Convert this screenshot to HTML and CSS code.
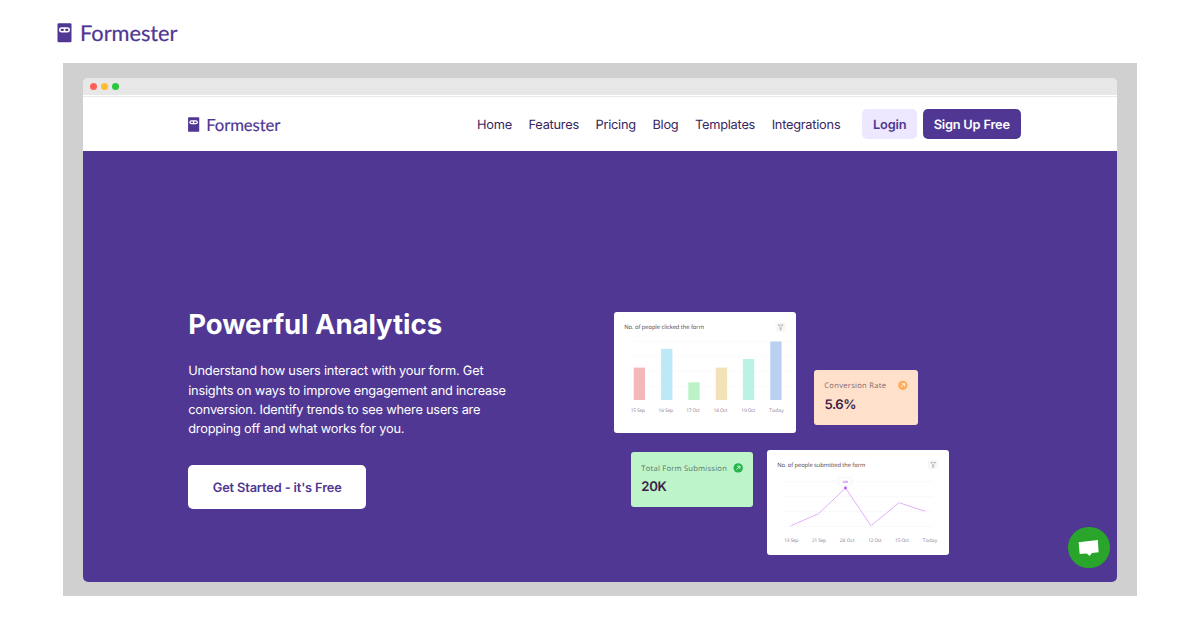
FILE: index.html
```html
<!DOCTYPE html>
<html lang="en">
<head>
<meta charset="utf-8">
<title>Formester</title>
<link rel="stylesheet" href="styles.css">
</head>
<body>
<header class="brand">
  <svg class="brand-logo" viewBox="0 0 124 26" role="img" aria-label="Formester">
    <rect x="0.5" y="3.3" width="14" height="19" rx="1.2" fill="#4f3793"/>
    <rect x="2" y="7.2" width="11" height="5.2" rx="2.6" fill="#fff"/>
    <rect x="3.6" y="8.7" width="3.3" height="2.2" rx="1" fill="#4f3793"/><rect x="8.1" y="8.7" width="3.3" height="2.2" rx="1" fill="#4f3793"/>
    <text x="23" y="21.2" textLength="97.5" class="wordmark">Formester</text>
  </svg>
</header>
<main class="stage">
  <div class="window">
    <div class="titlebar"><i class="dot red"></i><i class="dot yellow"></i><i class="dot green"></i></div>
    <nav class="nav">
      <svg class="nav-logo" viewBox="0 0 124 26" role="img" aria-label="Formester">
        <rect x="1" y="2.9" width="14.5" height="19" rx="1.2" fill="#4f3793"/>
        <rect x="2.7" y="6.8" width="11" height="5.2" rx="2.6" fill="#fff"/>
        <rect x="4.3" y="8.3" width="3.3" height="2.2" rx="1" fill="#4f3793"/><rect x="8.8" y="8.3" width="3.3" height="2.2" rx="1" fill="#4f3793"/>
        <text x="24.5" y="21.2" textLength="96.5" class="wordmark">Formester</text>
      </svg>
      <div class="links"><a>Home</a><a>Features</a><a>Pricing</a><a>Blog</a><a>Templates</a><a>Integrations</a></div>
      <a class="btn login">Login</a>
      <a class="btn signup">Sign Up Free</a>
    </nav>
    <section class="hero">
      <div class="copy">
        <h1>Powerful Analytics</h1>
        <p>Understand how users interact with your form. Get<br>insights on ways to improve engagement and increase<br>conversion. Identify trends to see where users are<br>dropping off and what works for you.</p>
        <a class="cta">Get Started - it's Free</a>
      </div>
      <div class="art">
        <div class="row top">
          <svg class="card bars" viewBox="0 0 182 120.5">
            <text x="10.3" y="17" textLength="79.7" class="title">No. of people clicked the form</text>
            <rect x="161.5" y="10" width="10.5" height="10" rx="2" fill="#f8f8f8"/>
            <path d="M164.2 12.9h5l-1.9 2.3v2.3l-1.2.7v-3z" class="filter"/>
            <path d="M20 29.3H178M20 44.2H178M20 59.2H178M20 74.2H178" class="grid"/>
            <rect x="19.7" y="55.6" width="11.3" height="32.4" fill="#f4b8bb"/>
            <rect x="47.1" y="36.8" width="11.3" height="51.2" fill="#bde9f6"/>
            <rect x="74.3" y="70.3" width="11.3" height="17.7" fill="#bbf2c6"/>
            <rect x="101.8" y="55.6" width="11.3" height="32.4" fill="#f3e2b8"/>
            <rect x="128.9" y="47" width="11.3" height="41" fill="#baf2e6"/>
            <rect x="156.3" y="29.5" width="11.3" height="58.5" fill="#bad0f3"/>
            <g class="axis"><text x="16.7" y="100" textLength="14.3">15 Sep</text><text x="44.5" y="100" textLength="14.5">16 Sep</text><text x="72.3" y="100" textLength="13.5">17 Oct</text><text x="99.5" y="100" textLength="14">18 Oct</text><text x="127.3" y="100" textLength="14">19 Oct</text><text x="155.3" y="100" textLength="14.3">Today</text></g>
          </svg>
          <svg class="card rate" viewBox="0 0 104 55">
            <text x="10.3" y="18.2" textLength="61.7" class="label">Conversion Rate</text>
            <circle cx="88.8" cy="15.4" r="4.7" fill="#ffad5c"/><path d="M87 17.2l3.5-3.5M87.8 13.7h2.7v2.7" class="arrow"/>
            <text x="10.5" y="38.9" textLength="32" class="value">5.6%</text>
          </svg>
        </div>
        <div class="row bottom">
          <svg class="card total" viewBox="0 0 122 55">
            <text x="10.3" y="19" textLength="85.5" class="label">Total Form Submission</text>
            <circle cx="107.2" cy="15.9" r="4.7" fill="#26b54b"/><path d="M105.4 17.7l3.5-3.5M106.2 14.2h2.7v2.7" class="arrow"/>
            <text x="10.3" y="39.3" textLength="25.5" class="value">20K</text>
          </svg>
          <svg class="card line" viewBox="0 0 182 105">
            <text x="10.3" y="16.5" textLength="88" class="title">No. of people submitted the form</text>
            <rect x="161" y="9.8" width="10.5" height="9.5" rx="2" fill="#f8f8f8"/>
            <path d="M163.7 12.4h5l-1.9 2.3v2.3l-1.2.7v-3z" class="filter"/>
            <path d="M17 31.7H166M17 46.7H166M17 61.7H166M17 76.5H166" class="grid"/>
            <path d="M24 75.7L51.5 63.7L78.5 38L104 75.7L132 52.7L158 61.2" class="trend"/>
            <g fill="#fff" stroke="#e3c3ff" stroke-width=".4"><circle cx="24" cy="75.7" r="1"/><circle cx="51.5" cy="63.7" r="1"/><circle cx="104" cy="75.7" r="1"/><circle cx="132" cy="52.7" r="1"/><circle cx="158" cy="61.2" r="1"/></g>
            <rect x="71.6" y="27.3" width="13" height="8" rx="1.3" fill="#fff" stroke="#f0e4fa" stroke-width=".5"/>
            <text x="75.5" y="32.5" textLength="5.5" class="tip">20K</text>
            <circle cx="78.5" cy="38" r="1.4" fill="#b455f5"/>
            <g class="axis"><text x="17.3" y="91.5" textLength="14">13 Sep</text><text x="45" y="91.5" textLength="14">21 Sep</text><text x="72.7" y="91.5" textLength="15">28 Oct</text><text x="101.3" y="91.5" textLength="13.5">12 Oct</text><text x="128" y="91.5" textLength="14">15 Oct</text><text x="155.8" y="91.5" textLength="14.3">Today</text></g>
          </svg>
        </div>
      </div>
      <div class="chat"><svg viewBox="0 0 42 42"><path d="M10.8 15.4L30.2 13.2L31 25.6L24.2 26.3L21.9 29.3L19 26.7L11.8 27.4Z" fill="#fff"/></svg></div>
    </section>
  </div>
</main>
</body>
</html>
```
FILE: styles.css
```css
* { box-sizing: border-box; }
body { margin: 0; background: #fff; font-family: Inter, "Liberation Sans", sans-serif; width: 1200px; height: 630px; overflow: hidden; text-rendering: geometricPrecision; }
svg { display: block; flex: none; overflow: visible; }
.brand { height: 63px; padding: 20px 0 0 57px; }
.brand-logo { width: 124px; height: 26px; }
.wordmark { font: 21.8px Lato, sans-serif; fill: #4f3793; stroke: #4f3793; stroke-width: .2px; }
.stage { width: 1074px; height: 533px; margin-left: 63px; padding: 14.5px 19.7px; background: #d0d0d0; }
.window { width: 1034.5px; height: 504px; border-radius: 5px; overflow: hidden; background: #fff; }
.titlebar { height: 17.5px; background: #e7e7e7; display: flex; gap: 3.8px; align-items: center; padding: 1px 0 0 7px; }
.dot { width: 7.4px; height: 7.4px; border-radius: 50%; }
.red { background: #ff5f57; }
.yellow { background: #febc2e; }
.green { background: #28c840; }
.nav { height: 56.3px; display: flex; align-items: center; padding: 0 96.5px 0 104.5px; border-top: 1px solid #fff; box-shadow: inset 0 1px #e9e9e9; }
.nav-logo { width: 96px; height: 20px; margin-top: 2px; }
.links { display: flex; gap: 16.5px; margin: 3.4px 21.8px 0 auto; font-size: 12.8px; letter-spacing: -.24px; color: #37265f; }
.btn { height: 30px; border-radius: 5px; display: flex; align-items: center; justify-content: center; font-size: 12.8px; font-weight: 600; letter-spacing: -.2px; padding-top: 3px; }
.login { width: 55px; background: #ede7ff; color: #4f3793; margin-right: 5.5px; }
.signup { width: 98px; background: #4f3793; color: #fff; }
.hero { position: relative; height: 431px; background: #4f3793; display: flex; padding-left: 105.5px; color: #fff; }
.copy { width: 425.8px; padding-top: 155px; }
h1 { margin: 0; font-size: 27.5px; line-height: 36px; font-weight: 700; letter-spacing: -.05px; }
p { margin: 20px 0 26px; font-size: 12.8px; line-height: 19.3px; letter-spacing: -.22px; white-space: nowrap; }
.cta { display: flex; width: 178px; height: 44px; align-items: center; justify-content: center; background: #fff; color: #4f3793; border-radius: 5px; font-size: 12.8px; font-weight: 600; letter-spacing: -.14px; padding-top: 2px; }
.art { padding-top: 161px; }
.row { display: flex; }
.top { gap: 18px; align-items: flex-end; }
.rate { margin-bottom: 8px; }
.bottom { gap: 14px; margin: 17px 0 0 17px; }
.total { margin-top: 2.5px; }
.card { border-radius: 3px; background: #fff; }
.bars { width: 182px; height: 120.5px; }
.line { width: 182px; height: 105px; }
.rate { width: 104px; height: 55px; background: #ffe1cb; }
.total { width: 122px; height: 55px; background: #bdf4c9; }
.title { font: 5.8px "Open Sans", sans-serif; fill: #48404e; }
.axis { font: 4.8px "Open Sans", sans-serif; fill: #887a8e; }
.label { font: 7.6px "Open Sans", sans-serif; fill: #80646f; }
.total .label { fill: #5f7768; }
.value { font: 600 13.2px Inter, sans-serif; fill: #3b2047; }
.tip { font: 600 3px Inter, sans-serif; fill: #b455f5; }
.grid { stroke: #eeeeef; stroke-width: .5; stroke-dasharray: 2.5 1.5; }
.trend { fill: none; stroke: #dca6fa; stroke-width: .9; }
.filter { fill: none; stroke: #888; stroke-width: .5; }
.arrow { fill: none; stroke: #fff; stroke-width: .8; }
.chat { position: absolute; right: 7.5px; bottom: 14px; width: 41.5px; height: 41.5px; border-radius: 50%; background: #2aa52c; }
```
